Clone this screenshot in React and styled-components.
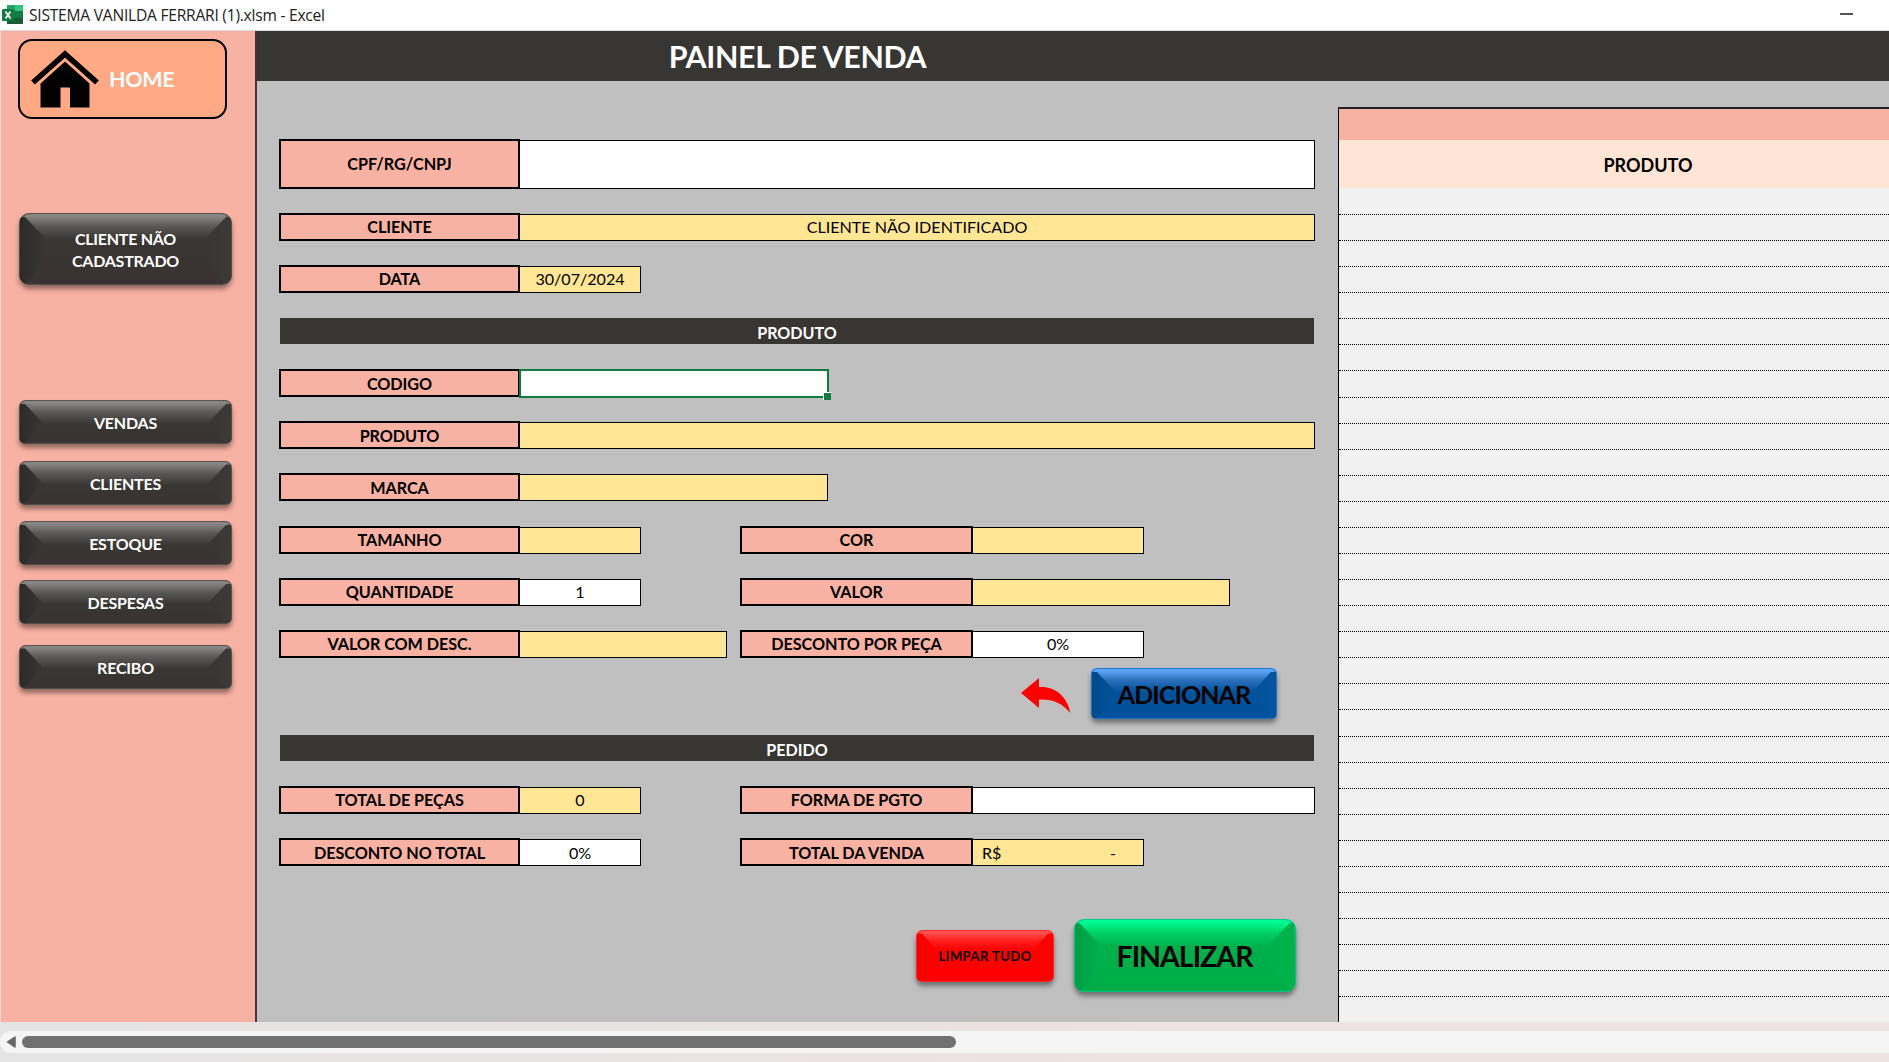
import React from "react";
import styled, { createGlobalStyle, css } from "styled-components";

const SALMON = "#f8b2a3";
const CHARCOAL = "#383633";
const YELLOW = "#ffe695";

const GlobalStyle = createGlobalStyle`
  * { box-sizing: border-box; }
  html, body { margin: 0; padding: 0; overflow: hidden; }
  body { font-family: Lato, Roboto, sans-serif; color: #000; }
`;

const Window = styled.div`
  width: 1889px;
  height: 1062px;
  display: flex;
  flex-direction: column;
  background: #fff;
`;

const WindowBar = styled.header`
  height: 31px;
  flex: none;
  display: flex;
  align-items: center;
  padding: 0 36px 2px 2px;
  background: #fff;
  border-bottom: 1px solid #dcdcdc;
`;

const WindowTitle = styled.span`
  margin-left: 6px;
  flex: 1;
  font-family: "Open Sans", sans-serif;
  font-size: 15.6px;
  letter-spacing: -0.24px;
  line-height: 24px;
  padding-top: 1px;
  color: #222;
`;

const Minimize = styled.span`
  width: 13px;
  height: 2px;
  background: #555;
`;

const Sheet = styled.main`
  height: 991px;
  flex: none;
  display: flex;
  border-left: 1px solid #dcdcdc;
`;

const Sidebar = styled.nav`
  width: 256px;
  flex: none;
  display: flex;
  flex-direction: column;
  padding: 8px 0 0 17px;
  background: ${SALMON};
  border-right: 2px solid #4a3533;
`;

const HomeButton = styled.button`
  width: 209px;
  height: 80px;
  flex: none;
  display: flex;
  align-items: center;
  gap: 10px;
  padding: 0 0 1px 11px;
  border: 2px solid #000;
  border-radius: 14px;
  background: #ffa985;
  color: #fff;
  font: 700 21.5px Lato, sans-serif;
  letter-spacing: -0.3px;
`;

const bevelTones = {
  dark: { top: "#8d8b89", mid: "#5b5957", face: "#383633", low: "#3a3231", left: "#2d2b2a", right: "#3c3937", rim: "#54504e" },
  blue: { top: "#62a8f8", mid: "#2c6fbd", face: "#00529a", low: "#00509b", left: "#004a8c", right: "#06549f", rim: "#1f78cf" },
  red: { top: "#ff5454", mid: "#ff2222", face: "#ff0000", low: "#ff0000", left: "#f80000", right: "#ff0000", rim: "#ff2a2a" },
  green: { top: "#00ff98", mid: "#00d168", face: "#00b04b", low: "#00ad46", left: "#009d45", right: "#00b34c", rim: "#00c882" },
};

const BevelButton = styled.button`
  ${({ $tone, $w, $h, $top = 0, $left = 0, $size = 16, $bevel = 22 }) => {
    const t = bevelTones[$tone];
    return css`
      width: ${$w}px;
      height: ${$h}px;
      margin: ${$top}px 0 0 ${$left}px;
      font-size: ${$size}px;
      background: linear-gradient(${t.top} 2px, ${t.mid} ${$bevel * 0.55}px, ${t.face} ${$bevel * 1.1}px, ${t.low});
      box-shadow: inset 0 0 1px 1px ${t.rim}, 0 4px 5px rgba(0, 0, 0, 0.42);
      &::before, &::after {
        content: "";
        position: absolute;
        top: 1px;
        bottom: 1px;
        width: ${$bevel}px;
      }
      &::before {
        left: 1px;
        background: linear-gradient(90deg, ${t.left}, ${t.face});
        clip-path: polygon(0 3px, 5px 3px, 100% ${$bevel - 1}px, 100% calc(100% - ${$bevel - 2}px), 5px 100%, 0 100%);
      }
      &::after {
        right: 1px;
        background: linear-gradient(90deg, ${t.face}, ${t.right});
        clip-path: polygon(100% 3px, calc(100% - 5px) 3px, 0 ${$bevel - 1}px, 0 calc(100% - ${$bevel - 2}px), calc(100% - 5px) 100%, 100% 100%);
      }
    `;
  }}
  position: relative;
  overflow: hidden;
  flex: none;
  padding: ${({ $drop = 0 }) => $drop}px 0 0;
  border: 0;
  border-radius: ${({ $radius = 7 }) => $radius}px;
  color: ${({ $tone }) => ($tone === "dark" ? "#fff" : "#000")};
  font-family: Lato, sans-serif;
  font-weight: 700;
  line-height: 22px;
  letter-spacing: ${({ $track = 0 }) => $track}px;
`;

const Workspace = styled.section`
  flex: 1;
  min-width: 0;
  display: flex;
  flex-direction: column;
  background: #c0c0c0;
`;

const PanelTitle = styled.h1`
  height: 50px;
  flex: none;
  margin: 0;
  padding-left: 23px;
  background: ${CHARCOAL};
  color: #fff;
  font-size: 30.4px;
  letter-spacing: -0.35px;
  font-weight: 700;
  line-height: 50px;
  span { display: block; width: 1035px; text-align: center; }
`;

const Columns = styled.div`
  flex: 1;
  display: flex;
`;

const Form = styled.form`
  width: 1081px;
  flex: none;
  display: flex;
  flex-direction: column;
  padding: 57.6px 0 0 22px;
`;

const Row = styled.div`
  height: ${({ $h = 28 }) => $h}px;
  flex: none;
  display: flex;
  align-items: stretch;
  margin-bottom: 24.15px;
`;

const Label = styled.label`
  width: ${({ $w = 241 }) => $w}px;
  flex: none;
  display: flex;
  align-items: center;
  justify-content: center;
  border: 2px solid #000;
  background: ${SALMON};
  font-size: 16.2px;
  letter-spacing: -0.05px;
  font-weight: 700;
`;

const Value = styled.div`
  width: ${({ $w }) => $w}px;
  flex: none;
  display: flex;
  align-items: center;
  justify-content: ${({ $money }) => ($money ? "space-between" : "center")};
  padding: ${({ $money }) => ($money ? "0 27px 0 9px" : "0")};
  margin-top: 1px;
  border: 1px solid #000;
  border-left: 0;
  background: ${({ $editable }) => ($editable ? "#fff" : YELLOW)};
  font-size: 16.1px;
  line-height: 24px;
`;

const ActiveCell = styled.div`
  position: relative;
  width: 310px;
  height: 29px;
  flex: none;
  margin-left: -1px;
  border: 2px solid #107c41;
  background: #fff;
  &::after {
    content: "";
    position: absolute;
    right: -4px;
    bottom: -4px;
    width: 7px;
    height: 7px;
    border: 1px solid #fff;
    border-right: 0;
    border-bottom: 0;
    background: #107c41;
  }
`;

const Spacer = styled.div`
  width: ${({ $w }) => $w}px;
  flex: none;
`;

const SectionBar = styled.h2`
  width: 1034px;
  height: 26px;
  flex: none;
  margin: 1px 0 25.15px 1px;
  background: ${CHARCOAL};
  color: #fff;
  font-size: 16.1px;
  font-weight: 700;
  line-height: 29px;
  text-align: center;
`;

const AddRow = styled.div`
  height: 80px;
  flex: none;
  display: flex;
  align-items: flex-start;
  margin-top: -14px;
  margin-bottom: -14.2px;
  padding-left: 742px;
`;

const ArrowSlot = styled.div`
  display: flex;
  padding-top: 10px;
`;

const FinishRow = styled.div`
  display: flex;
  align-items: flex-start;
  margin-top: 29px;
  padding-left: 637px;
`;

const Table = styled.section`
  flex: 1;
  display: flex;
  flex-direction: column;
  margin-top: 26px;
  border-top: 2px solid #222;
  border-left: 1px solid #000;
  background: #f1f1f1;
  overflow: hidden;
`;

const TableBand = styled.div`
  height: 31px;
  flex: none;
  background: ${SALMON};
`;

const TableHead = styled.div`
  height: 48px;
  flex: none;
  padding-left: 3px;
  background: #ffe5d6;
  font-size: 18px;
  font-weight: 700;
  line-height: 51px;
  span { display: block; width: 612px; text-align: center; }
`;

const TableLine = styled.div`
  height: ${({ $first }) => ($first ? 27 : 26.08)}px;
  flex: none;
  border-bottom: 1px dotted #000;
`;

const BottomBar = styled.footer`
  flex: 1;
  padding-top: 9px;
  background: linear-gradient(90deg, #e4e4e4 0, #e8e4e3 25%, #ede3e1 60%);
`;

const ScrollTrack = styled.div`
  height: 22px;
  display: flex;
  align-items: center;
  gap: 6px;
  padding-left: 6px;
  border-radius: 11px 0 0 11px;
  background: #f5f5f5;
`;

const ScrollThumb = styled.div`
  width: 934px;
  height: 12px;
  border-radius: 6px;
  background: #717171;
`;

function ExcelIcon() {
  return (
    <svg width="21" height="19" viewBox="0 0 21 19">
      <rect x="5" y="0" width="16" height="19" rx="1.2" fill="#21a366" />
      <path d="M5 0h8v9.5H5z" fill="#21a366" />
      <path d="M13 0h7a1 1 0 0 1 1 1v5h-8z" fill="#33c481" />
      <path d="M5 5h8v8H5z" fill="#107c41" />
      <path d="M13 6h8v7h-8z" fill="#107c41" />
      <path d="M5 13h16v5a1 1 0 0 1-1 1H6a1 1 0 0 1-1-1z" fill="#185c37" />
      <rect x="0" y="4" width="12" height="12" rx="1" fill="#107c41" />
      <path d="M3.5 6.5l5 7M8.5 6.5l-5 7" stroke="#fff" strokeWidth="1.8" />
    </svg>
  );
}

function HouseIcon() {
  return (
    <svg width="68" height="58" viewBox="0 0 68 58">
      <path d="M2 32.5L34 4l32 28.5" fill="none" stroke="#000" strokeWidth="5.6" />
      <path d="M34 11.5L58.5 33.5V57.5H39V37.5H29.5V57.5H9.500V33.5z" fill="#000" />
    </svg>
  );
}

function BackArrow() {
  return (
    <svg width="50" height="36" viewBox="0 0 50 36">
      <path d="M0 15L18 0V9C34 8 46 18 49.5 35C41 25 32 21 18 21.5V30z" fill="#f00" />
    </svg>
  );
}

const menu = [
  { text: "VENDAS", gap: 115 },
  { text: "CLIENTES", gap: 16.5 },
  { text: "ESTOQUE", gap: 16.5 },
  { text: "DESPESAS", gap: 15 },
  { text: "RECIBO", gap: 20.5 },
];

export default function App() {
  return (
    <Window>
      <GlobalStyle />
      <WindowBar>
        <ExcelIcon />
        <WindowTitle>SISTEMA VANILDA FERRARI (1).xlsm - Excel</WindowTitle>
        <Minimize />
      </WindowBar>
      <Sheet>
        <Sidebar>
          <HomeButton>
            <HouseIcon />
            HOME
          </HomeButton>
          <BevelButton $tone="dark" $w={213} $h={72} $top={94} $left={1} $radius={11} $bevel={24} $track={-0.25} $drop={2}>
            CLIENTE NÃO
            <br />
            CADASTRADO
          </BevelButton>
          {menu.map((item) => (
            <BevelButton key={item.text} $tone="dark" $w={213} $h={44} $top={item.gap} $left={1} $track={-0.2} $drop={2}>
              {item.text}
            </BevelButton>
          ))}
        </Sidebar>
        <Workspace>
          <PanelTitle>
            <span>PAINEL DE VENDA</span>
          </PanelTitle>
          <Columns>
            <Form>
              <Row $h={50}>
                <Label>CPF/RG/CNPJ</Label>
                <Value $w={795} $editable />
              </Row>
              <Row>
                <Label>CLIENTE</Label>
                <Value $w={795}>CLIENTE NÃO IDENTIFICADO</Value>
              </Row>
              <Row>
                <Label>DATA</Label>
                <Value $w={121}>30/07/2024</Value>
              </Row>
              <SectionBar>PRODUTO</SectionBar>
              <Row>
                <Label>CODIGO</Label>
                <ActiveCell />
              </Row>
              <Row>
                <Label>PRODUTO</Label>
                <Value $w={795} />
              </Row>
              <Row>
                <Label>MARCA</Label>
                <Value $w={308} />
              </Row>
              <Row>
                <Label>TAMANHO</Label>
                <Value $w={121} />
                <Spacer $w={99} />
                <Label $w={233}>COR</Label>
                <Value $w={171} />
              </Row>
              <Row>
                <Label>QUANTIDADE</Label>
                <Value $w={121} $editable>1</Value>
                <Spacer $w={99} />
                <Label $w={233}>VALOR</Label>
                <Value $w={257} />
              </Row>
              <Row>
                <Label>VALOR COM DESC.</Label>
                <Value $w={207} />
                <Spacer $w={13} />
                <Label $w={233}>DESCONTO POR PEÇA</Label>
                <Value $w={171} $editable>0%</Value>
              </Row>
              <AddRow>
                <ArrowSlot>
                  <BackArrow />
                </ArrowSlot>
                <BevelButton $tone="blue" $w={186} $h={51} $left={20} $size={25} $radius={6} $track={-0.9}>
                  ADICIONAR
                </BevelButton>
              </AddRow>
              <SectionBar>PEDIDO</SectionBar>
              <Row>
                <Label>TOTAL DE PEÇAS</Label>
                <Value $w={121}>0</Value>
                <Spacer $w={99} />
                <Label $w={233}>FORMA DE PGTO</Label>
                <Value $w={342} $editable />
              </Row>
              <Row>
                <Label>DESCONTO NO TOTAL</Label>
                <Value $w={121} $editable>0%</Value>
                <Spacer $w={99} />
                <Label $w={233}>TOTAL DA VENDA</Label>
                <Value $w={171} $money>
                  <span>R$</span>
                  <span>-</span>
                </Value>
              </Row>
              <FinishRow>
                <BevelButton $tone="red" $w={138} $h={52} $top={10.5} $size={13} $bevel={18} $track={0.45}>
                  LIMPAR TUDO
                </BevelButton>
                <BevelButton $tone="green" $w={222} $h={73} $left={19.5} $size={28.5} $radius={11} $bevel={25} $track={-1}>
                  FINALIZAR
                </BevelButton>
              </FinishRow>
            </Form>
            <Table>
              <TableBand />
              <TableHead>
                <span>PRODUTO</span>
              </TableHead>
              {Array.from({ length: 31 }, (_, i) => (
                <TableLine key={i} $first={i === 0} />
              ))}
            </Table>
          </Columns>
        </Workspace>
      </Sheet>
      <BottomBar>
        <ScrollTrack>
          <svg width="10" height="12" viewBox="0 0 10 12">
            <path d="M9 1v10L1.5 6z" fill="#666" stroke="#666" strokeWidth="1.5" strokeLinejoin="round" />
          </svg>
          <ScrollThumb />
        </ScrollTrack>
      </BottomBar>
    </Window>
  );
}
